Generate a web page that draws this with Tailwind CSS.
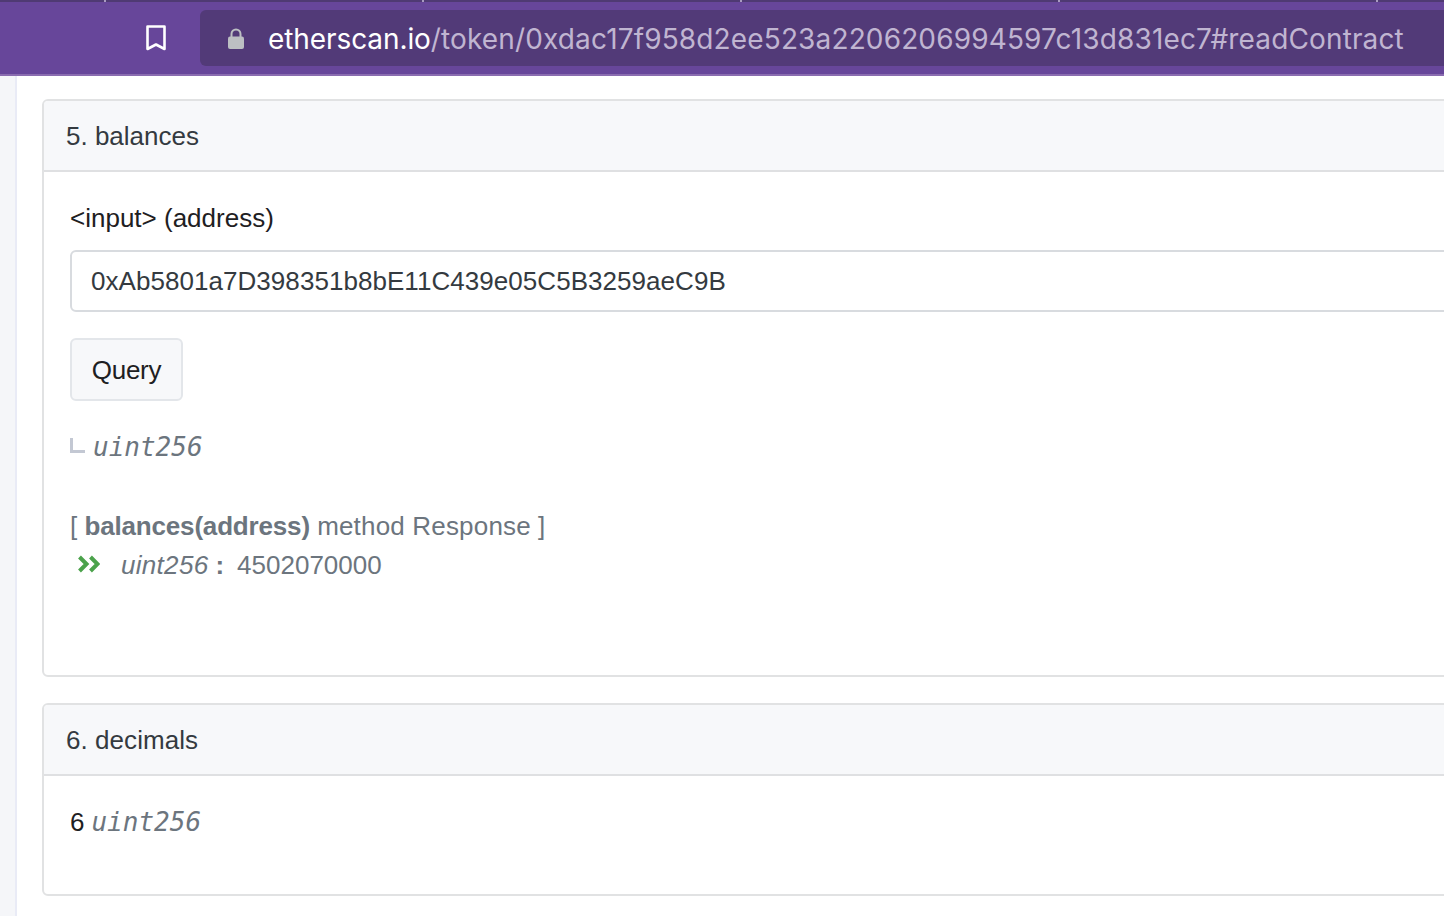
<!DOCTYPE html>
<html lang="en">
<head>
  <meta charset="UTF-8">
  <title>Read Contract</title>
  <script src="https://cdn.jsdelivr.net/npm/@tailwindcss/browser@4"></script>
</head>
<body class="w-[1444px] h-[916px] overflow-hidden bg-white font-['Liberation_Sans',sans-serif]">
  <!-- browser chrome -->
  <header class="h-[76px] bg-[#67469a] border-b-2 border-[#8a6cb0] flex flex-col">
    <div class="h-[2px] bg-[#4f3a73] flex pl-[104px] gap-[316px]">
      <i class="w-[2px] h-[2px] bg-[#a99bc0]"></i>
      <i class="w-[2px] h-[2px] bg-[#a99bc0]"></i>
      <i class="w-[2px] h-[2px] bg-[#a99bc0]"></i>
      <i class="w-[2px] h-[2px] bg-[#a99bc0]"></i>
      <i class="w-[2px] h-[2px] bg-[#a99bc0]"></i>
    </div>
    <div class="flex items-center pt-[8px] pl-[146px]">
      <svg class="w-[20px] h-[26px] mr-[34px] shrink-0" viewBox="0 0 20 26" fill="none" stroke="#fff" stroke-width="2.6" stroke-linejoin="round">
        <path d="M1.500 1.500h17v22.500l-8.500-4.500l-8.500 4.500z"/>
      </svg>
      <div class="w-[1300px] h-[56px] bg-[#523a78] rounded-l-[6px] flex items-center pl-[28px] overflow-hidden">
        <svg class="w-[16px] h-[21px] mr-[24px] shrink-0" viewBox="0 0 16 21" fill="none">
          <path d="M3.500 9V6a4.500 4.500 0 0 1 9 0v3" stroke="#bcbfc3" stroke-width="2"/>
          <rect x="0" y="8.500" width="16" height="12.500" rx="2" fill="#bcbfc3"/>
        </svg>
        <span class="font-['Inter',sans-serif] text-[28px] tracking-[0.14px] pt-[1px] text-[#c0b5d1] whitespace-nowrap"><span class="text-white tracking-[-0.09px]">etherscan.io</span>/token/0xdac17f958d2ee523a2206206994597c13d831ec7#readContract</span>
      </div>
    </div>
  </header>

  <div class="flex h-[840px]">
    <aside class="w-[17px] shrink-0 bg-[#f5f6f9] border-r-2 border-[#e9ebf6]"></aside>
    <main class="pl-[25px] pt-[23px] flex flex-col gap-[26px]">
      <section class="w-[1500px] h-[578px] border-2 border-[#e1e2e3] rounded-[6px] overflow-hidden">
        <div class="h-[71px] bg-[#f7f8fa] border-b-2 border-[#dfe0e2] flex items-center pl-[22px] pt-[1px] text-[26px] text-[#343a40]">5. balances</div>
        <div class="pl-[26px] pt-[30px]">
          <div class="text-[26px] leading-[32px] text-[#1e2022]">&lt;input&gt; (address)</div>
          <input class="block mt-[16px] w-[1440px] h-[62px] border-2 border-[#d8dbdf] rounded-[6px] pl-[19px] text-[26px] tracking-[0.05px] text-[#343a40] outline-none" value="0xAb5801a7D398351b8bE11C439e05C5B3259aeC9B">
          <button class="block mt-[26px] w-[113px] h-[63px] bg-[#f7f8fa] border-2 border-[#e3e6ea] rounded-[6px] pt-[1px] text-[26px] tracking-[-0.3px] text-[#1e2022]">Query</button>
          <div class="flex items-center mt-[28px] h-[36px]">
            <span class="block w-[15px] h-[15px] mb-[3px] border-l-[3px] border-b-[3px] border-[#c3c8d3] mr-[8px]"></span>
            <span class="font-['DejaVu_Sans_Mono',monospace] italic text-[26px] text-[#6c757e]">uint256</span>
          </div>
          <div class="mt-[44px] text-[26px] leading-[34px] text-[#6c757e]">[ <b class="tracking-[-0.17px]">balances(address)</b> <span class="tracking-[0.18px]">method Response</span> ]</div>
          <div class="flex items-center mt-[5px] h-[34px] text-[26px] text-[#6c757e]">
            <svg class="w-[22px] h-[18px] ml-[8px] mr-[21px] mb-[2px] shrink-0" viewBox="0 0 22 18" fill="none" stroke="#4ba24b" stroke-width="4">
              <path d="M1.500 2l7 7l-7 7M12.500 2l7 7l-7 7"/>
            </svg>
            <i class="tracking-[0.3px]">uint256</i>
            <b class="ml-[7px] mr-[13px]">:</b>
            <span>4502070000</span>
          </div>
        </div>
      </section>
      <section class="w-[1500px] h-[193px] border-2 border-[#e1e2e3] rounded-[6px] overflow-hidden">
        <div class="h-[71px] bg-[#f7f8fa] border-b-2 border-[#dfe0e2] flex items-center pl-[22px] pt-[1px] text-[26px] tracking-[0.05px] text-[#343a40]">6. decimals</div>
        <div class="pl-[26px] pt-[15px] flex items-center gap-[7px] h-[62px] box-content text-[26px] text-[#1e2022]">
          <span>6</span>
          <span class="font-['DejaVu_Sans_Mono',monospace] italic text-[#6c757e]">uint256</span>
        </div>
      </section>
    </main>
  </div>
</body>
</html>
